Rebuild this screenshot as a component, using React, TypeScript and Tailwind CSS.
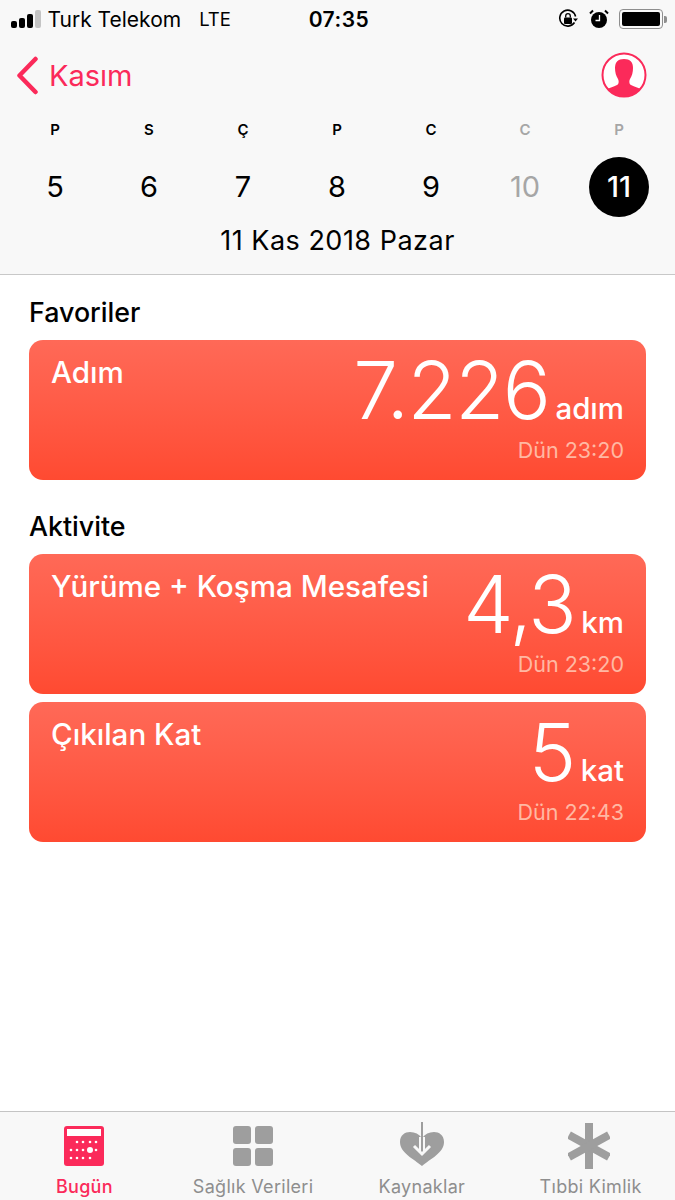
const DAYS = [
  { letter: "P", num: "5" },
  { letter: "S", num: "6" },
  { letter: "Ç", num: "7" },
  { letter: "P", num: "8" },
  { letter: "C", num: "9" },
  { letter: "C", num: "10", muted: true },
  { letter: "P", num: "11", muted: true, active: true },
];

function StatusBar() {
  return (
    <div className="flex h-[38px] items-center justify-between pl-[11px] pr-[8px] text-[21px] leading-none text-black">
      <div className="flex w-[260px] items-center">
        <div className="flex items-end gap-[2.5px]">
          <span className="h-[7px] w-[5.500px] rounded-[2px] bg-black" />
          <span className="h-[10px] w-[5.500px] rounded-[2px] bg-black" />
          <span className="h-[14px] w-[5.500px] rounded-[2px] bg-black" />
          <span className="h-[18px] w-[5.500px] rounded-[2px] bg-[#c4c4c4]" />
        </div>
        <span className="ml-[7px]">Turk Telekom</span>
        <span className="ml-[18px] text-[18.500px]">LTE</span>
      </div>
      <span className="text-[21px] font-semibold tracking-wide">07:35</span>
      <div className="flex w-[260px] items-center justify-end">
        <svg width="20" height="20" viewBox="0 0 20 20" className="mr-[11px]">
          <path d="M16.500 13.500A8 8 0 1 1 17.600 7.500" fill="none" stroke="#000" strokeWidth="1.600" />
          <path d="M15 9.500h5l-2.500 3z" fill="#000" />
          <rect x="6" y="8.500" width="8" height="6.500" rx="1" fill="#000" />
          <path d="M7.700 8.500V7a2.300 2.300 0 0 1 4.600 0v1.500" fill="none" stroke="#000" strokeWidth="1.300" />
        </svg>
        <svg width="20" height="20" viewBox="0 0 20 20" className="mr-[10px]">
          <circle cx="10" cy="11" r="8" fill="#000" />
          <path d="M10.500 6v5.500H6.500" fill="none" stroke="#fff" strokeWidth="1.300" />
          <path d="M1 4.500 4 1.500M19 4.500 16 1.500" stroke="#000" strokeWidth="2" />
        </svg>
        <div className="flex items-center">
          <div className="h-[20px] w-[44px] rounded-[4px] border-[1.5px] border-[#8e8e8e] p-[2px]">
            <div className="h-full w-full rounded-[2px] bg-black" />
          </div>
          <span className="ml-[1px] h-[7px] w-[3px] rounded-r-[2px] bg-[#8e8e8e]" />
        </div>
      </div>
    </div>
  );
}

function Avatar() {
  return (
    <svg width="46" height="46" viewBox="0 0 46 46">
      <defs>
        <clipPath id="avatar-clip">
          <circle cx="23" cy="23" r="21.500" />
        </clipPath>
      </defs>
      <circle cx="23" cy="23" r="21.500" fill="#fff" stroke="#fb2a5a" strokeWidth="2" />
      <path
        clipPath="url(#avatar-clip)"
        d="M23 7c-6 0-9 3-9 9 0 4 1 8 3 11 1 2 1 5-1 6-3 2-9 3-12 5v8h38v-8c-3-2-9-3-12-5-2-1-2-4-1-6 2-3 3-7 3-11 0-6-3-9-9-9z"
        fill="#fb2a5a"
      />
    </svg>
  );
}

function Header() {
  return (
    <header className="h-[275px] shrink-0 border-b border-[#c8c8c8] bg-[#f8f8f8]">
      <StatusBar />
      <div className="flex h-[76px] items-center justify-between pl-[16px] pr-[28px] pb-[2px]">
        <div className="flex items-center text-[#fb2a5a]">
          <svg width="23" height="39" viewBox="0 0 23 39">
            <path d="M19.500 3 3.500 19.500l16 16.500" fill="none" stroke="#fb2a5a" strokeWidth="4.500" strokeLinecap="round" strokeLinejoin="round" />
          </svg>
          <span className="ml-[10px] text-[29px] leading-none">Kasım</span>
        </div>
        <Avatar />
      </div>
      <div className="grid grid-cols-[repeat(7,94px)] pl-[8px]">
        {DAYS.map((d, i) => (
          <div key={i} className="flex flex-col items-center">
            <span className={`mt-[3px] flex h-[26px] items-center text-[15px] font-semibold ${d.muted ? "text-[#a6a6a6]" : "text-black"}`}>
              {d.letter}
            </span>
            <span
              className={`mt-[14px] flex h-[60px] w-[60px] items-center justify-center rounded-full text-[29px] ${
                d.active ? "bg-black font-medium text-white" : d.muted ? "text-[#a6a6a6]" : "text-black"
              }`}
            >
              {d.num}
            </span>
          </div>
        ))}
      </div>
      <p className="mt-[7px] text-center text-[27px] leading-[34px] tracking-[0.5px] text-black">11 Kas 2018 Pazar</p>
    </header>
  );
}

function MetricCard({ title, value, unit, time }: { title: string; value: string; unit: string; time: string }) {
  return (
    <div className="flex h-[140px] justify-between rounded-[14px] bg-gradient-to-b from-[#ff6957] to-[#ff4a31] px-[22px] text-white">
      <span className="mt-[16px] text-[29.600px] font-medium leading-[32px]">{title}</span>
      <div className="flex flex-col items-end">
        <div className="mt-[8px] flex h-[84px] items-baseline">
          <span className="text-[80px] font-light leading-[84px] tracking-[-1.500px]">{value}</span>
          <span className="ml-[6px] text-[29.500px] font-medium leading-none">{unit}</span>
        </div>
        <span className="mt-[5px] text-[21.500px] leading-[26px] text-[#ffb8a3]">{time}</span>
      </div>
    </div>
  );
}

function SectionTitle({ children }: { children: string }) {
  return <h2 className="text-[26.800px] font-medium leading-[32px] text-black">{children}</h2>;
}

function TabLabel({ children, active }: { children: string; active?: boolean }) {
  return (
    <span className={`text-[18px] leading-[20px] tracking-[0.3px] ${active ? "font-medium text-[#fb2a5a]" : "text-[#8e8e8e]"}`}>
      {children}
    </span>
  );
}

function TabBar() {
  return (
    <nav className="grid h-[89px] shrink-0 grid-cols-4 border-t border-[#c4c4c4] bg-[#f8f8f8]">
      <div className="flex flex-col items-center">
        <div className="flex h-[65px] items-start pt-[14px]">
          <svg width="40" height="40" viewBox="0 0 40 40">
            <rect width="40" height="40" rx="3" fill="#fb2a5a" />
            <rect x="3" y="3" width="34" height="7" fill="#fff" />
            {[13, 19, 26, 32].map((x) => (
              <circle key={`a${x}`} cx={x} cy="16" r="1.300" fill="#fff" />
            ))}
            {[7, 13, 19, 32].map((x) => (
              <circle key={`b${x}`} cx={x} cy="24" r="1.300" fill="#fff" />
            ))}
            <circle cx="26" cy="24" r="3" fill="#fff" />
            {[7, 13, 19, 26].map((x) => (
              <circle key={`c${x}`} cx={x} cy="32" r="1.300" fill="#fff" />
            ))}
          </svg>
        </div>
        <TabLabel active>Bugün</TabLabel>
      </div>
      <div className="flex flex-col items-center">
        <div className="flex h-[65px] items-start pt-[14px]">
          <div className="grid h-[40px] w-[40px] grid-cols-2 gap-[4px]">
            <span className="rounded-[3px] bg-[#9e9e9e]" />
            <span className="rounded-[3px] bg-[#9e9e9e]" />
            <span className="rounded-[3px] bg-[#9e9e9e]" />
            <span className="rounded-[3px] bg-[#9e9e9e]" />
          </div>
        </div>
        <TabLabel>Sağlık Verileri</TabLabel>
      </div>
      <div className="flex flex-col items-center">
        <div className="flex h-[65px] items-start pt-[9px]">
          <svg width="46" height="46" viewBox="0 0 46 46">
            <path d="M23 45C15 38 1 32 1 21 1 14 6 11 11 11c5 0 9 2 12 6 3-4 7-6 12-6 5 0 10 3 10 10 0 11-14 17-22 24z" fill="#9e9e9e" />
            <path d="M23 16v14" stroke="#f8f8f8" strokeWidth="6" />
            <path d="M23 1v31" stroke="#9e9e9e" strokeWidth="2" />
            <path d="M15 25l8 8 8-8" fill="none" stroke="#f8f8f8" strokeWidth="3" />
          </svg>
        </div>
        <TabLabel>Kaynaklar</TabLabel>
      </div>
      <div className="flex flex-col items-center">
        <div className="flex h-[65px] items-start pt-[11px] pr-[3px]">
          <svg width="42" height="46" viewBox="0 0 42 46">
            <g stroke="#9e9e9e" strokeWidth="8">
              <path d="M21 0v46" />
              <path d="M1 12l40 22" />
              <path d="M1 34l40-22" />
            </g>
          </svg>
        </div>
        <TabLabel>Tıbbi Kimlik</TabLabel>
      </div>
    </nav>
  );
}

export default function App() {
  return (
    <div className="flex h-[1200px] w-[675px] flex-col overflow-hidden bg-white font-['Inter','Liberation_Sans',sans-serif]">
      <Header />
      <main className="flex-1 px-[29px] pt-[21px]">
        <SectionTitle>Favoriler</SectionTitle>
        <div className="mt-[12px]">
          <MetricCard title="Adım" value="7.226" unit="adım" time="Dün 23:20" />
        </div>
        <div className="mt-[30px]">
          <SectionTitle>Aktivite</SectionTitle>
        </div>
        <div className="mt-[12px] flex flex-col gap-[8px]">
          <MetricCard title="Yürüme + Koşma Mesafesi" value="4,3" unit="km" time="Dün 23:20" />
          <MetricCard title="Çıkılan Kat" value="5" unit="kat" time="Dün 22:43" />
        </div>
      </main>
      <TabBar />
    </div>
  );
}
